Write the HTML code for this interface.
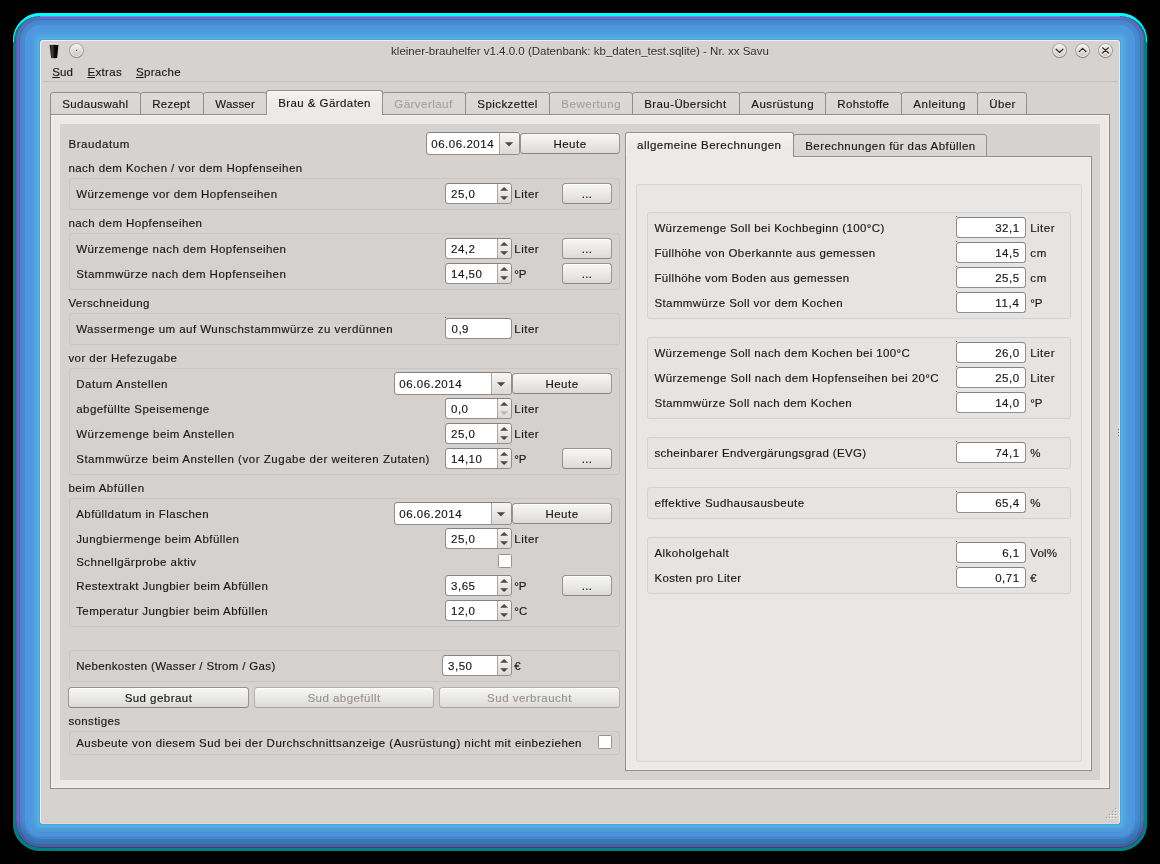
<!DOCTYPE html>
<html><head><meta charset="utf-8"><title>kleiner-brauhelfer</title><style>
html,body{margin:0;padding:0;background:#000;}
#root{position:absolute;left:0;top:0;width:1160px;height:864px;overflow:hidden;will-change:transform;}
body{width:1160px;height:864px;overflow:hidden;position:relative;font-family:"Liberation Sans",sans-serif;font-size:12px;color:#181615;}
.abs,.pane,.tab,.grp,.grp2,.grp3,.spin,.edit,.btn,.chk,.t,.title,.glow,.glowtop,.glowtop2,.glowbot,.win{position:absolute;box-sizing:border-box;}
.glow{left:13px;top:13px;width:1134px;height:838px;border-radius:27px;border:3px solid #008080;background:#46a8dc;
 box-shadow:inset 0 0 0 1px #5a5ab0,inset 0 0 0 2px #4a7ab8,inset 0 0 0 3px #6a66cc,inset 0 0 0 4px #4a69b0,inset 0 0 0 5px #4489c4,inset 0 0 0 6px #3890c0,inset 0 0 0 7px #4486de,inset 0 0 0 9px #498acd,inset 0 0 0 13px #4e96de,inset 0 0 0 15px #4c98e2,inset 0 0 0 18px #4e9cdc,inset 0 0 0 21px #50a4e0,inset 0 0 0 23px #55aee4;}
.glowtop{left:13px;top:13px;width:1134px;height:29px;border-radius:27px 27px 0 0;border-top:3px solid #00ffff;border-left:1px solid #00ffff;border-right:1px solid #00ffff;}
.glowtop2{left:40px;top:16px;width:1080px;height:1px;background:#7f80ff;}
.glowbot{left:13px;top:13px;width:1134px;height:838px;border-radius:27px;border:3px solid #008080;background:#44a8dc;-webkit-mask-image:linear-gradient(to bottom,transparent 806px,#000 822px);mask-image:linear-gradient(to bottom,transparent 806px,#000 822px);
 box-shadow:inset 0 0 0 1px #403c80,inset 0 0 0 2px #3c6498,inset 0 0 0 3px #5858b0,inset 0 0 0 4px #4060a0,inset 0 0 0 6px #2c7ea8,inset 0 0 0 7px #3c70c4,inset 0 0 0 9px #3c78b8,inset 0 0 0 10px #4488d0,inset 0 0 0 11px #4484c8,inset 0 0 0 15px #4c92da,inset 0 0 0 16px #4890d0,inset 0 0 0 20px #4a98d6,inset 0 0 0 23px #55aadc;}
.win{left:40px;top:40px;width:1080px;height:784px;background:#d6d2d0;border-radius:4px;box-shadow:inset 1px 1px 0 #f3f0ee,inset -1px 0 0 #f0e8e4,inset 0 -1px 0 #e2d8d2;}
.title{left:40px;top:44px;width:1080px;text-align:center;font-size:11.5px;line-height:14px;color:#2c2a29;white-space:pre;text-shadow:0 1px 0 rgba(255,255,255,0.55);}
.t{white-space:pre;line-height:14px;font-size:11.5px;-webkit-text-stroke:0.15px currentColor;}
.t u{text-decoration:underline;text-underline-offset:1px;}
.pane{background:#ebeae8;border:1px solid #8f8c8a;box-shadow:inset 0 0 0 1px #f3f2f1;}
.tab{background:linear-gradient(#dddbd9,#d8d6d4);border:1px solid #918e8c;border-radius:3px 3px 0 0;}
.tab.sel{background:linear-gradient(#f5f4f3,#ebeae8 60%);border-bottom:none;box-shadow:inset 1px 1px 0 #f8f7f6;}
.grp{border:1px solid #cac6c4;border-radius:3px;background:#d5d1cf;}
.grp2{border:1px solid #d6d5d3;border-radius:3px;background:#e8e7e5;}
.grp3{border:1px solid #d3d2d0;border-radius:3px;background:#e5e4e2;}
.spin,.edit{background:#fff;border:1px solid #918e8c;border-top-color:#85827f;border-radius:3.5px;}
.spbtn{position:absolute;box-sizing:border-box;right:0;top:0;bottom:0;width:14px;border-left:1px solid #a9a6a4;border-radius:0 2.5px 2.5px 0;background:linear-gradient(#f7f6f5,#dcdad8);}
.btn{border:1px solid #969391;border-bottom-color:#888583;border-radius:3.5px;background:linear-gradient(#f8f7f7,#eae9e8 50%,#dcdad8);box-shadow:inset 0 1px 0 #fdfdfc;}
.btn.dis{border-color:#b3b0ae;border-bottom-color:#a9a6a4;}
.chk{background:#fff;border:1px solid #959290;border-radius:1.5px;}
</style></head><body><div id="root">
<div class="glow"></div><div class="glowtop"></div><div class="glowtop2"></div><div class="glowbot"></div>
<div class="win"></div>
<svg class="abs" style="left:47px;top:42px" width="14" height="18" viewBox="0 0 14 18">
<defs><linearGradient id="cupg" x1="0" x2="1" y1="0" y2="0"><stop offset="0" stop-color="#1c1c1c"/><stop offset="0.3" stop-color="#3c3c3c"/><stop offset="0.6" stop-color="#0a0a0a"/><stop offset="1" stop-color="#000"/></linearGradient>
<linearGradient id="rbo" x1="0" x2="0" y1="0" y2="1"><stop offset="0" stop-color="#b3b0ae"/><stop offset="1" stop-color="#7f7c7a"/></linearGradient>
<linearGradient id="rbi" x1="0" x2="0" y1="0" y2="1"><stop offset="0" stop-color="#f3f2f1"/><stop offset="1" stop-color="#cbc8c6"/></linearGradient></defs>
<path d="M4 16 L10.2 16 L10.1 16.6 L4.1 16.6 Z" fill="#eeeceb"/>
<path d="M2.5 2.4 L11.5 2.4 L10.1 16.1 Q7.1 16.5 4.1 16.1 Z" fill="url(#cupg)"/>
<path d="M2.4 1.8 Q7 1.2 11.6 1.8 L11.5 2.7 Q7 2.3 2.5 2.7 Z" fill="#f4f3f2"/>
</svg>
<svg class="abs" style="left:67px;top:41px" width="20" height="20" viewBox="0 0 20 20"><g transform="translate(0.50,0.50)">
<circle cx="9" cy="9" r="7.4" fill="url(#rbo)"/><circle cx="9" cy="9" r="6.45" fill="#f8f7f6"/><circle cx="9" cy="9" r="5.7" fill="url(#rbi)"/><rect x="8.4" y="9.4" width="1.2" height="1.1" fill="#fff"/><rect x="8.4" y="8.3" width="1.2" height="1.2" fill="#2b2928"/></g></svg>
<svg class="abs" style="left:1050px;top:41px" width="20" height="20" viewBox="0 0 20 20"><g transform="translate(0.50,0.50)">
<circle cx="9" cy="9" r="7.4" fill="url(#rbo)"/><circle cx="9" cy="9" r="6.45" fill="#f8f7f6"/><circle cx="9" cy="9" r="5.7" fill="url(#rbi)"/><path d="M5.6 7.7 L9 11 L12.4 7.7" transform="translate(0,1)" stroke="#fdfdfc" fill="none" stroke-width="1.25" stroke-linecap="round" stroke-linejoin="round"/><path d="M5.6 7.7 L9 11 L12.4 7.7" stroke="#2e2c2b" fill="none" stroke-width="1.25" stroke-linecap="round" stroke-linejoin="round"/></g></svg>
<svg class="abs" style="left:1073px;top:41px" width="20" height="20" viewBox="0 0 20 20"><g transform="translate(0.60,0.50)">
<circle cx="9" cy="9" r="7.4" fill="url(#rbo)"/><circle cx="9" cy="9" r="6.45" fill="#f8f7f6"/><circle cx="9" cy="9" r="5.7" fill="url(#rbi)"/><path d="M5.6 10.2 L9 6.9 L12.4 10.2" transform="translate(0,1)" stroke="#fdfdfc" fill="none" stroke-width="1.25" stroke-linecap="round" stroke-linejoin="round"/><path d="M5.6 10.2 L9 6.9 L12.4 10.2" stroke="#2e2c2b" fill="none" stroke-width="1.25" stroke-linecap="round" stroke-linejoin="round"/></g></svg>
<svg class="abs" style="left:1096px;top:41px" width="20" height="20" viewBox="0 0 20 20"><g transform="translate(0.50,0.50)">
<circle cx="9" cy="9" r="7.4" fill="url(#rbo)"/><circle cx="9" cy="9" r="6.45" fill="#f8f7f6"/><circle cx="9" cy="9" r="5.7" fill="url(#rbi)"/><path d="M6.1 6.3 L11.9 11.5 M11.9 6.3 L6.1 11.5" transform="translate(0,1)" stroke="#fdfdfc" fill="none" stroke-width="1.25" stroke-linecap="round" stroke-linejoin="round"/><path d="M6.1 6.3 L11.9 11.5 M11.9 6.3 L6.1 11.5" stroke="#2e2c2b" fill="none" stroke-width="1.25" stroke-linecap="round" stroke-linejoin="round"/></g></svg>
<div class="title">kleiner-brauhelfer v1.4.0.0 (Datenbank: kb_daten_test.sqlite) - Nr. xx Savu</div>
<div class="abs" style="left:42px;top:81px;width:1076px;height:1px;background:#c3bfbd"></div>
<div class="pane" style="left:50px;top:114px;width:1060px;height:675px;"></div>
<div class="abs" style="left:60px;top:124px;width:1040px;height:656px;background:#d6d2d0"></div>
<div class="tab" style="left:50px;top:92px;width:91px;height:23px;"></div>
<div class="tab" style="left:140px;top:92px;width:64px;height:23px;"></div>
<div class="tab" style="left:203px;top:92px;width:64px;height:23px;"></div>
<div class="tab" style="left:382px;top:92px;width:84px;height:23px;"></div>
<div class="tab" style="left:465px;top:92px;width:85px;height:23px;"></div>
<div class="tab" style="left:549px;top:92px;width:84px;height:23px;"></div>
<div class="tab" style="left:632px;top:92px;width:108px;height:23px;"></div>
<div class="tab" style="left:739px;top:92px;width:87px;height:23px;"></div>
<div class="tab" style="left:825px;top:92px;width:77px;height:23px;"></div>
<div class="tab" style="left:901px;top:92px;width:77px;height:23px;"></div>
<div class="tab" style="left:977px;top:92px;width:50px;height:23px;"></div>
<div class="tab sel" style="left:266px;top:90px;width:117px;height:25px;"></div>
<div class="abs" style="left:267px;top:114px;width:115px;height:2px;background:#ebeae8"></div>
<div class="spin" style="left:426px;top:132px;width:94px;height:23px"><div class="spbtn" style="width:20px"></div><svg class="abs" style="left:77px;top:8px" width="10" height="6" viewBox="0 0 10 6"><path d="M0.85 1.2 L9.15 1.2 L5 5.4 Z" fill="#4b4948"/></svg></div>
<div class="btn" style="left:520px;top:133px;width:100px;height:21px;"></div>
<div class="grp" style="left:69px;top:178px;width:551px;height:32px;"></div>
<div class="spin" style="left:445px;top:183px;width:67px;height:21px"><div class="spbtn"></div><svg class="abs" style="right:0px;top:0" width="13" height="21" viewBox="0 0 13 21"><path d="M2.1 6.8 L6.1 2.9 L10.1 6.8 Z" fill="#4b4948"/><path d="M2.1 12.2 L6.1 16.1 L10.1 12.2 Z" fill="#4b4948"/></svg></div>
<div class="btn" style="left:562px;top:183px;width:50px;height:21px;"></div>
<div class="grp" style="left:69px;top:233px;width:551px;height:57px;"></div>
<div class="spin" style="left:445px;top:238px;width:67px;height:21px"><div class="spbtn"></div><svg class="abs" style="right:0px;top:0" width="13" height="21" viewBox="0 0 13 21"><path d="M2.1 6.8 L6.1 2.9 L10.1 6.8 Z" fill="#4b4948"/><path d="M2.1 12.2 L6.1 16.1 L10.1 12.2 Z" fill="#4b4948"/></svg></div>
<div class="btn" style="left:562px;top:238px;width:50px;height:21px;"></div>
<div class="spin" style="left:445px;top:263px;width:67px;height:21px"><div class="spbtn"></div><svg class="abs" style="right:0px;top:0" width="13" height="21" viewBox="0 0 13 21"><path d="M2.1 6.8 L6.1 2.9 L10.1 6.8 Z" fill="#4b4948"/><path d="M2.1 12.2 L6.1 16.1 L10.1 12.2 Z" fill="#4b4948"/></svg></div>
<div class="btn" style="left:562px;top:263px;width:50px;height:21px;"></div>
<div class="grp" style="left:69px;top:313px;width:551px;height:32px;"></div>
<div class="edit" style="left:445px;top:318px;width:67px;height:21px;"></div>
<div class="abs" style="left:445px;top:317px;width:1px;height:1px;background:#5c5a58"></div>
<div class="grp" style="left:69px;top:368px;width:551px;height:107px;"></div>
<div class="spin" style="left:394px;top:372px;width:118px;height:23px"><div class="spbtn" style="width:20px"></div><svg class="abs" style="left:101px;top:8px" width="10" height="6" viewBox="0 0 10 6"><path d="M0.85 1.2 L9.15 1.2 L5 5.4 Z" fill="#4b4948"/></svg></div>
<div class="btn" style="left:512px;top:373px;width:100px;height:21px;"></div>
<div class="spin" style="left:445px;top:398px;width:67px;height:21px"><div class="spbtn"></div><svg class="abs" style="right:0px;top:0" width="13" height="21" viewBox="0 0 13 21"><path d="M2.1 6.8 L6.1 2.9 L10.1 6.8 Z" fill="#4b4948"/><path d="M2.1 12.2 L6.1 16.1 L10.1 12.2 Z" fill="#b9b6b4"/></svg></div>
<div class="spin" style="left:445px;top:423px;width:67px;height:21px"><div class="spbtn"></div><svg class="abs" style="right:0px;top:0" width="13" height="21" viewBox="0 0 13 21"><path d="M2.1 6.8 L6.1 2.9 L10.1 6.8 Z" fill="#4b4948"/><path d="M2.1 12.2 L6.1 16.1 L10.1 12.2 Z" fill="#4b4948"/></svg></div>
<div class="spin" style="left:445px;top:448px;width:67px;height:21px"><div class="spbtn"></div><svg class="abs" style="right:0px;top:0" width="13" height="21" viewBox="0 0 13 21"><path d="M2.1 6.8 L6.1 2.9 L10.1 6.8 Z" fill="#4b4948"/><path d="M2.1 12.2 L6.1 16.1 L10.1 12.2 Z" fill="#4b4948"/></svg></div>
<div class="btn" style="left:562px;top:448px;width:50px;height:21px;"></div>
<div class="grp" style="left:69px;top:498px;width:551px;height:129px;"></div>
<div class="spin" style="left:394px;top:502px;width:118px;height:23px"><div class="spbtn" style="width:20px"></div><svg class="abs" style="left:101px;top:8px" width="10" height="6" viewBox="0 0 10 6"><path d="M0.85 1.2 L9.15 1.2 L5 5.4 Z" fill="#4b4948"/></svg></div>
<div class="btn" style="left:512px;top:503px;width:100px;height:21px;"></div>
<div class="spin" style="left:445px;top:528px;width:67px;height:21px"><div class="spbtn"></div><svg class="abs" style="right:0px;top:0" width="13" height="21" viewBox="0 0 13 21"><path d="M2.1 6.8 L6.1 2.9 L10.1 6.8 Z" fill="#4b4948"/><path d="M2.1 12.2 L6.1 16.1 L10.1 12.2 Z" fill="#4b4948"/></svg></div>
<div class="chk" style="left:498px;top:554px;width:14px;height:14px;"></div>
<div class="spin" style="left:445px;top:575px;width:67px;height:21px"><div class="spbtn"></div><svg class="abs" style="right:0px;top:0" width="13" height="21" viewBox="0 0 13 21"><path d="M2.1 6.8 L6.1 2.9 L10.1 6.8 Z" fill="#4b4948"/><path d="M2.1 12.2 L6.1 16.1 L10.1 12.2 Z" fill="#4b4948"/></svg></div>
<div class="btn" style="left:562px;top:575px;width:50px;height:21px;"></div>
<div class="spin" style="left:445px;top:600px;width:67px;height:21px"><div class="spbtn"></div><svg class="abs" style="right:0px;top:0" width="13" height="21" viewBox="0 0 13 21"><path d="M2.1 6.8 L6.1 2.9 L10.1 6.8 Z" fill="#4b4948"/><path d="M2.1 12.2 L6.1 16.1 L10.1 12.2 Z" fill="#4b4948"/></svg></div>
<div class="grp" style="left:69px;top:650px;width:551px;height:32px;"></div>
<div class="spin" style="left:442px;top:655px;width:70px;height:21px"><div class="spbtn"></div><svg class="abs" style="right:0px;top:0" width="13" height="21" viewBox="0 0 13 21"><path d="M2.1 6.8 L6.1 2.9 L10.1 6.8 Z" fill="#4b4948"/><path d="M2.1 12.2 L6.1 16.1 L10.1 12.2 Z" fill="#4b4948"/></svg></div>
<div class="btn" style="left:68px;top:687px;width:181px;height:21px;"></div>
<div class="btn dis" style="left:254px;top:687px;width:180px;height:21px;"></div>
<div class="btn dis" style="left:439px;top:687px;width:181px;height:21px;"></div>
<div class="grp" style="left:69px;top:731px;width:551px;height:24px;"></div>
<div class="chk" style="left:598px;top:735px;width:14px;height:14px;"></div>
<div class="pane" style="left:625px;top:156px;width:467px;height:615px;"></div>
<div class="tab" style="left:793px;top:134px;width:194px;height:23px;"></div>
<div class="tab sel" style="left:625px;top:132px;width:169px;height:25px;"></div>
<div class="abs" style="left:626px;top:156px;width:167px;height:2px;background:#ebeae8"></div>
<div class="grp2" style="left:636px;top:184px;width:446px;height:578px;"></div>
<div class="grp3" style="left:647px;top:212px;width:424px;height:107px;"></div>
<div class="edit" style="left:956px;top:217px;width:70px;height:21px;"></div>
<div class="abs" style="left:956px;top:216px;width:1px;height:1px;background:#5c5a58"></div>
<div class="edit" style="left:956px;top:242px;width:70px;height:21px;"></div>
<div class="abs" style="left:956px;top:241px;width:1px;height:1px;background:#5c5a58"></div>
<div class="edit" style="left:956px;top:267px;width:70px;height:21px;"></div>
<div class="abs" style="left:956px;top:266px;width:1px;height:1px;background:#5c5a58"></div>
<div class="edit" style="left:956px;top:292px;width:70px;height:21px;"></div>
<div class="abs" style="left:956px;top:291px;width:1px;height:1px;background:#5c5a58"></div>
<div class="grp3" style="left:647px;top:337px;width:424px;height:82px;"></div>
<div class="edit" style="left:956px;top:342px;width:70px;height:21px;"></div>
<div class="abs" style="left:956px;top:341px;width:1px;height:1px;background:#5c5a58"></div>
<div class="edit" style="left:956px;top:367px;width:70px;height:21px;"></div>
<div class="abs" style="left:956px;top:366px;width:1px;height:1px;background:#5c5a58"></div>
<div class="edit" style="left:956px;top:392px;width:70px;height:21px;"></div>
<div class="abs" style="left:956px;top:391px;width:1px;height:1px;background:#5c5a58"></div>
<div class="grp3" style="left:647px;top:437px;width:424px;height:32px;"></div>
<div class="edit" style="left:956px;top:442px;width:70px;height:21px;"></div>
<div class="abs" style="left:956px;top:441px;width:1px;height:1px;background:#5c5a58"></div>
<div class="grp3" style="left:647px;top:487px;width:424px;height:32px;"></div>
<div class="edit" style="left:956px;top:492px;width:70px;height:21px;"></div>
<div class="abs" style="left:956px;top:491px;width:1px;height:1px;background:#5c5a58"></div>
<div class="grp3" style="left:647px;top:537px;width:424px;height:57px;"></div>
<div class="edit" style="left:956px;top:542px;width:70px;height:21px;"></div>
<div class="abs" style="left:956px;top:541px;width:1px;height:1px;background:#5c5a58"></div>
<div class="edit" style="left:956px;top:567px;width:70px;height:21px;"></div>
<div class="abs" style="left:956px;top:566px;width:1px;height:1px;background:#5c5a58"></div>
<div class="abs" style="left:1115px;top:808px;width:1px;height:1px;background:#9f9b99"></div><div class="abs" style="left:1116px;top:809px;width:1px;height:1px;background:#f6f4f3"></div><div class="abs" style="left:1112px;top:811px;width:1px;height:1px;background:#9f9b99"></div><div class="abs" style="left:1113px;top:812px;width:1px;height:1px;background:#f6f4f3"></div><div class="abs" style="left:1115px;top:811px;width:1px;height:1px;background:#9f9b99"></div><div class="abs" style="left:1116px;top:812px;width:1px;height:1px;background:#f6f4f3"></div><div class="abs" style="left:1109px;top:814px;width:1px;height:1px;background:#9f9b99"></div><div class="abs" style="left:1110px;top:815px;width:1px;height:1px;background:#f6f4f3"></div><div class="abs" style="left:1112px;top:814px;width:1px;height:1px;background:#9f9b99"></div><div class="abs" style="left:1113px;top:815px;width:1px;height:1px;background:#f6f4f3"></div><div class="abs" style="left:1115px;top:814px;width:1px;height:1px;background:#9f9b99"></div><div class="abs" style="left:1116px;top:815px;width:1px;height:1px;background:#f6f4f3"></div><div class="abs" style="left:1106px;top:817px;width:1px;height:1px;background:#9f9b99"></div><div class="abs" style="left:1107px;top:818px;width:1px;height:1px;background:#f6f4f3"></div><div class="abs" style="left:1109px;top:817px;width:1px;height:1px;background:#9f9b99"></div><div class="abs" style="left:1110px;top:818px;width:1px;height:1px;background:#f6f4f3"></div><div class="abs" style="left:1112px;top:817px;width:1px;height:1px;background:#9f9b99"></div><div class="abs" style="left:1113px;top:818px;width:1px;height:1px;background:#f6f4f3"></div><div class="abs" style="left:1115px;top:817px;width:1px;height:1px;background:#9f9b99"></div><div class="abs" style="left:1116px;top:818px;width:1px;height:1px;background:#f6f4f3"></div>
<div class="abs" style="left:1118px;top:429px;width:1px;height:1px;background:#77736f"></div><div class="abs" style="left:1119px;top:430px;width:1px;height:1px;background:#f8f6f4"></div>
<div class="abs" style="left:1118px;top:432px;width:1px;height:1px;background:#77736f"></div><div class="abs" style="left:1119px;top:433px;width:1px;height:1px;background:#f8f6f4"></div>
<div class="abs" style="left:1118px;top:435px;width:1px;height:1px;background:#77736f"></div><div class="abs" style="left:1119px;top:436px;width:1px;height:1px;background:#f8f6f4"></div>
<span class="t" style="left:52.20px;top:64.80px;letter-spacing:0.156px;"><u style="letter-spacing:0;margin-right:0.156px">S</u>ud</span>
<span class="t" style="left:87.40px;top:64.80px;letter-spacing:0.365px;"><u style="letter-spacing:0;margin-right:0.365px">E</u>xtras</span>
<span class="t" style="left:136.00px;top:64.80px;letter-spacing:0.31px;"><u style="letter-spacing:0;margin-right:0.31px">S</u>prache</span>
<span class="t" style="left:62.30px;top:96.80px;letter-spacing:0.35px;">Sudauswahl</span>
<span class="t" style="left:152.30px;top:96.80px;letter-spacing:0.221px;">Rezept</span>
<span class="t" style="left:215.30px;top:96.80px;letter-spacing:0.185px;">Wasser</span>
<span class="t" style="left:394.30px;top:96.80px;letter-spacing:0.455px;color:#a5a19f;">Gärverlauf</span>
<span class="t" style="left:477.30px;top:96.80px;letter-spacing:0.439px;">Spickzettel</span>
<span class="t" style="left:561.30px;top:96.80px;letter-spacing:0.54px;color:#a5a19f;">Bewertung</span>
<span class="t" style="left:644.30px;top:96.80px;letter-spacing:0.393px;">Brau-Übersicht</span>
<span class="t" style="left:751.30px;top:96.80px;letter-spacing:0.452px;">Ausrüstung</span>
<span class="t" style="left:837.30px;top:96.80px;letter-spacing:0.33px;">Rohstoffe</span>
<span class="t" style="left:913.30px;top:96.80px;letter-spacing:0.517px;">Anleitung</span>
<span class="t" style="left:989.30px;top:96.80px;letter-spacing:0.348px;">Über</span>
<span class="t" style="left:278.20px;top:95.80px;letter-spacing:0.428px;">Brau &amp; Gärdaten</span>
<span class="t" style="left:68.40px;top:136.80px;letter-spacing:0.583px;">Braudatum</span>
<span class="t" style="left:431.20px;top:136.80px;letter-spacing:0.542px;">06.06.2014</span>
<span class="t" style="left:553.45px;top:136.80px;letter-spacing:0.481px;">Heute</span>
<span class="t" style="left:68.40px;top:160.80px;letter-spacing:0.425px;">nach dem Kochen / vor dem Hopfenseihen</span>
<span class="t" style="left:76.20px;top:186.80px;letter-spacing:0.452px;">Würzemenge vor dem Hopfenseihen</span>
<span class="t" style="left:451.00px;top:186.80px;letter-spacing:0.527px;">25,0</span>
<span class="t" style="left:514.30px;top:186.80px;letter-spacing:0.484px;">Liter</span>
<span class="t" style="left:581.75px;top:186.80px;letter-spacing:0.302px;">...</span>
<span class="t" style="left:68.40px;top:215.80px;letter-spacing:0.447px;">nach dem Hopfenseihen</span>
<span class="t" style="left:76.20px;top:241.80px;letter-spacing:0.438px;">Würzemenge nach dem Hopfenseihen</span>
<span class="t" style="left:451.00px;top:241.80px;letter-spacing:0.527px;">24,2</span>
<span class="t" style="left:514.30px;top:241.80px;letter-spacing:0.484px;">Liter</span>
<span class="t" style="left:581.75px;top:241.80px;letter-spacing:0.302px;">...</span>
<span class="t" style="left:76.20px;top:266.80px;letter-spacing:0.472px;">Stammwürze nach dem Hopfenseihen</span>
<span class="t" style="left:451.00px;top:266.80px;letter-spacing:0.544px;">14,50</span>
<span class="t" style="left:514.30px;top:266.80px;letter-spacing:-0.07px;">°P</span>
<span class="t" style="left:581.75px;top:266.80px;letter-spacing:0.302px;">...</span>
<span class="t" style="left:68.40px;top:295.80px;letter-spacing:0.41px;">Verschneidung</span>
<span class="t" style="left:76.20px;top:321.80px;letter-spacing:0.463px;">Wassermenge um auf Wunschstammwürze zu verdünnen</span>
<span class="t" style="left:451.50px;top:321.80px;letter-spacing:0.5px;">0,9</span>
<span class="t" style="left:514.30px;top:321.80px;letter-spacing:0.484px;">Liter</span>
<span class="t" style="left:68.40px;top:350.80px;letter-spacing:0.44px;">vor der Hefezugabe</span>
<span class="t" style="left:76.20px;top:376.80px;letter-spacing:0.542px;">Datum Anstellen</span>
<span class="t" style="left:399.20px;top:376.80px;letter-spacing:0.542px;">06.06.2014</span>
<span class="t" style="left:545.45px;top:376.80px;letter-spacing:0.481px;">Heute</span>
<span class="t" style="left:76.20px;top:401.80px;letter-spacing:0.459px;">abgefüllte Speisemenge</span>
<span class="t" style="left:451.00px;top:401.80px;letter-spacing:0.5px;">0,0</span>
<span class="t" style="left:514.30px;top:401.80px;letter-spacing:0.484px;">Liter</span>
<span class="t" style="left:76.20px;top:426.80px;letter-spacing:0.481px;">Würzemenge beim Anstellen</span>
<span class="t" style="left:451.00px;top:426.80px;letter-spacing:0.527px;">25,0</span>
<span class="t" style="left:514.30px;top:426.80px;letter-spacing:0.484px;">Liter</span>
<span class="t" style="left:76.20px;top:451.80px;letter-spacing:0.525px;">Stammwürze beim Anstellen (vor Zugabe der weiteren Zutaten)</span>
<span class="t" style="left:451.00px;top:451.80px;letter-spacing:0.544px;">14,10</span>
<span class="t" style="left:514.30px;top:451.80px;letter-spacing:-0.07px;">°P</span>
<span class="t" style="left:581.75px;top:451.80px;letter-spacing:0.302px;">...</span>
<span class="t" style="left:68.40px;top:480.80px;letter-spacing:0.553px;">beim Abfüllen</span>
<span class="t" style="left:76.20px;top:506.80px;letter-spacing:0.439px;">Abfülldatum in Flaschen</span>
<span class="t" style="left:399.20px;top:506.80px;letter-spacing:0.542px;">06.06.2014</span>
<span class="t" style="left:545.45px;top:506.80px;letter-spacing:0.481px;">Heute</span>
<span class="t" style="left:76.20px;top:531.80px;letter-spacing:0.433px;">Jungbiermenge beim Abfüllen</span>
<span class="t" style="left:451.00px;top:531.80px;letter-spacing:0.527px;">25,0</span>
<span class="t" style="left:514.30px;top:531.80px;letter-spacing:0.484px;">Liter</span>
<span class="t" style="left:76.20px;top:554.80px;letter-spacing:0.464px;">Schnellgärprobe aktiv</span>
<span class="t" style="left:76.20px;top:578.80px;letter-spacing:0.421px;">Restextrakt Jungbier beim Abfüllen</span>
<span class="t" style="left:451.00px;top:578.80px;letter-spacing:0.527px;">3,65</span>
<span class="t" style="left:514.30px;top:578.80px;letter-spacing:-0.07px;">°P</span>
<span class="t" style="left:581.75px;top:578.80px;letter-spacing:0.302px;">...</span>
<span class="t" style="left:76.20px;top:603.80px;letter-spacing:0.429px;">Temperatur Jungbier beim Abfüllen</span>
<span class="t" style="left:451.00px;top:603.80px;letter-spacing:0.527px;">12,0</span>
<span class="t" style="left:514.30px;top:603.80px;letter-spacing:0.141px;">°C</span>
<span class="t" style="left:76.20px;top:658.80px;letter-spacing:0.331px;">Nebenkosten (Wasser / Strom / Gas)</span>
<span class="t" style="left:448.00px;top:658.80px;letter-spacing:0.527px;">3,50</span>
<span class="t" style="left:514.30px;top:658.80px;letter-spacing:0.594px;">€</span>
<span class="t" style="left:124.64px;top:690.80px;letter-spacing:0.459px;">Sud gebraut</span>
<span class="t" style="left:307.41px;top:690.80px;letter-spacing:0.465px;color:#979391;">Sud abgefüllt</span>
<span class="t" style="left:487.10px;top:690.80px;letter-spacing:0.485px;color:#979391;">Sud verbraucht</span>
<span class="t" style="left:68.40px;top:713.80px;letter-spacing:0.38px;">sonstiges</span>
<span class="t" style="left:76.20px;top:735.80px;letter-spacing:0.457px;">Ausbeute von diesem Sud bei der Durchschnittsanzeige (Ausrüstung) nicht mit einbeziehen</span>
<span class="t" style="left:805.20px;top:138.80px;letter-spacing:0.457px;">Berechnungen für das Abfüllen</span>
<span class="t" style="left:637.10px;top:137.80px;letter-spacing:0.468px;">allgemeine Berechnungen</span>
<span class="t" style="left:654.40px;top:220.80px;letter-spacing:0.37px;">Würzemenge Soll bei Kochbeginn (100°C)</span>
<span class="t" style="left:995.20px;top:220.80px;letter-spacing:0.527px;">32,1</span>
<span class="t" style="left:1030.20px;top:220.80px;letter-spacing:0.484px;">Liter</span>
<span class="t" style="left:654.40px;top:245.80px;letter-spacing:0.391px;">Füllhöhe von Oberkannte aus gemessen</span>
<span class="t" style="left:995.20px;top:245.80px;letter-spacing:0.527px;">14,5</span>
<span class="t" style="left:1030.20px;top:245.80px;letter-spacing:0.711px;">cm</span>
<span class="t" style="left:654.40px;top:270.80px;letter-spacing:0.374px;">Füllhöhe vom Boden aus gemessen</span>
<span class="t" style="left:995.20px;top:270.80px;letter-spacing:0.527px;">25,5</span>
<span class="t" style="left:1030.20px;top:270.80px;letter-spacing:0.711px;">cm</span>
<span class="t" style="left:654.40px;top:295.80px;letter-spacing:0.41px;">Stammwürze Soll vor dem Kochen</span>
<span class="t" style="left:995.20px;top:295.80px;letter-spacing:0.742px;">11,4</span>
<span class="t" style="left:1030.20px;top:295.80px;letter-spacing:-0.07px;">°P</span>
<span class="t" style="left:654.40px;top:345.80px;letter-spacing:0.375px;">Würzemenge Soll nach dem Kochen bei 100°C</span>
<span class="t" style="left:995.20px;top:345.80px;letter-spacing:0.527px;">26,0</span>
<span class="t" style="left:1030.20px;top:345.80px;letter-spacing:0.484px;">Liter</span>
<span class="t" style="left:654.40px;top:370.80px;letter-spacing:0.403px;">Würzemenge Soll nach dem Hopfenseihen bei 20°C</span>
<span class="t" style="left:995.20px;top:370.80px;letter-spacing:0.527px;">25,0</span>
<span class="t" style="left:1030.20px;top:370.80px;letter-spacing:0.484px;">Liter</span>
<span class="t" style="left:654.40px;top:395.80px;letter-spacing:0.397px;">Stammwürze Soll nach dem Kochen</span>
<span class="t" style="left:995.20px;top:395.80px;letter-spacing:0.527px;">14,0</span>
<span class="t" style="left:1030.20px;top:395.80px;letter-spacing:-0.07px;">°P</span>
<span class="t" style="left:654.40px;top:445.80px;letter-spacing:0.361px;">scheinbarer Endvergärungsgrad (EVG)</span>
<span class="t" style="left:995.20px;top:445.80px;letter-spacing:0.527px;">74,1</span>
<span class="t" style="left:1030.20px;top:445.80px;letter-spacing:0.219px;">%</span>
<span class="t" style="left:654.40px;top:495.80px;letter-spacing:0.468px;">effektive Sudhausausbeute</span>
<span class="t" style="left:995.20px;top:495.80px;letter-spacing:0.527px;">65,4</span>
<span class="t" style="left:1030.20px;top:495.80px;letter-spacing:0.219px;">%</span>
<span class="t" style="left:654.40px;top:545.80px;letter-spacing:0.448px;">Alkoholgehalt</span>
<span class="t" style="left:1002.20px;top:545.80px;letter-spacing:0.5px;">6,1</span>
<span class="t" style="left:1030.20px;top:545.80px;letter-spacing:0.176px;">Vol%</span>
<span class="t" style="left:654.40px;top:570.80px;letter-spacing:0.36px;">Kosten pro Liter</span>
<span class="t" style="left:995.20px;top:570.80px;letter-spacing:0.527px;">0,71</span>
<span class="t" style="left:1030.20px;top:570.80px;letter-spacing:0.594px;">€</span>
</div></body></html>
